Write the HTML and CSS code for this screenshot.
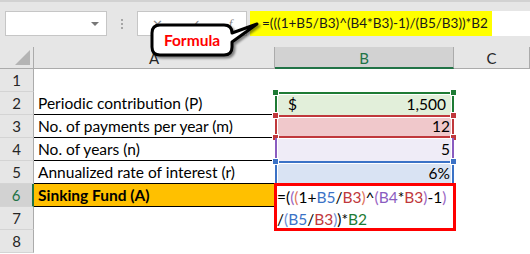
FILE: index.html
```html
<!DOCTYPE html>
<html lang="en">
<head>
    <meta charset="UTF-8">
    <title>Sinking Fund</title>
    <link rel="stylesheet" href="styles.css">
</head>
<body>
    <div class="toolbar">
        <div class="namebox"><span class="arrow"></span></div>
        <div class="dots"><i></i><i></i><i></i></div>
        <div class="fxbox"><span>&#10005;</span><span>&#10003;</span><span class="fx">f</span></div>
        <div class="formula-input"><span class="mark">=(((1+B5/B3)^(B4*B3)-1)/(B5/B3))*B2</span></div>

        <div class="callout">
            <svg width="115" height="42" viewBox="0 0 115 42">
                <path d="M12,5 H76 Q84,5 84,13 L109,4 L84,22 V27 Q84,35 76,35 H12 Q4,35 4,27 V13 Q4,5 12,5 Z" fill="#fff" stroke="#000" stroke-width="3" stroke-linejoin="round"/>
            </svg>
            <span class="callout-text">Formula</span>
        </div>
    </div>

    <div class="sheet">
        <div class="corner"><span class="tri"></span></div>
        <div class="colhead">A</div>
        <div class="colhead active">B</div>
        <div class="colhead">C</div>

        <div class="rowhead">1</div>
        <div class="cell"></div>
        <div class="cell"></div>
        <div class="cell"></div>

        <div class="rowhead">2</div>
        <div class="cell label">Periodic contribution (P)</div>
        <div class="cell ref green money"><span>$</span><span>1,500</span><i class="h tl"></i><i class="h tr"></i></div>
        <div class="cell"></div>

        <div class="rowhead">3</div>
        <div class="cell label">No. of payments per year (m)</div>
        <div class="cell ref red num">12<i class="h tl"></i><i class="h tr"></i><i class="h bl"></i><i class="h br"></i></div>
        <div class="cell"></div>

        <div class="rowhead">4</div>
        <div class="cell label">No. of years (n)</div>
        <div class="cell ref purple num">5</div>
        <div class="cell"></div>

        <div class="rowhead">5</div>
        <div class="cell label">Annualized rate of interest (r)</div>
        <div class="cell ref blue num">6%<i class="h tl"></i><i class="h tr"></i></div>
        <div class="cell"></div>

        <div class="rowhead current">6</div>
        <div class="cell label result">Sinking Fund (A)</div>
        <div class="editor">
            <span class="k">=(</span><span class="p2">(</span><span class="p3">(</span>1+<span class="c-blue">B5</span>/<span class="c-red">B3</span><span class="p3">)</span>^<span class="p4">(</span><span class="c-purple">B4</span>*<span class="c-red">B3</span><span class="p4">)</span>-1<span class="p2">)</span><br>/<span class="p5">(</span><span class="c-blue">B5</span>/<span class="c-red">B3</span><span class="p5">)</span>)*<span class="c-green">B2</span>
        </div>
        <div class="cell"></div>

        <div class="rowhead">7</div>
        <div class="cell"></div>
        <div class="cell"></div>

        <div class="rowhead">8</div>
        <div class="cell"></div>
        <div class="cell"></div>
        <div class="cell"></div>
    </div>
</body>
</html>
```

FILE: styles.css
```css
body {
    margin: 0;
    background-color: #fff;
    font-family: Lato, "Open Sans", sans-serif;
    color: #000;
    width: 530px;
    overflow: hidden;
}

/* barra della formula */
.toolbar {
    position: relative;
    height: 47px;
    background-color: #e6e6e6;
    border-top: 2px solid #d2d2d2;
    box-sizing: border-box;
    display: flex;
    align-items: flex-start;
    padding: 9px 0 0 5px;
}
.namebox {
    width: 102px;
    height: 25px;
    background-color: #fff;
    border: 1px solid #c6c6c6;
    display: flex;
    align-items: center;
    justify-content: flex-end;
    padding-right: 7px;
    box-sizing: border-box;
}
.arrow {
    width: 0;
    height: 0;
    border-left: 4px solid transparent;
    border-right: 4px solid transparent;
    border-top: 4px solid #777;
}
.dots {
    width: 30px;
    display: flex;
    flex-direction: column;
    align-items: center;
    gap: 2px;
    padding-top: 8px;
}
.dots i {
    width: 2px;
    height: 2px;
    background-color: #a6a6a6;
}
.fxbox {
    width: 110px;
    height: 25px;
    box-sizing: border-box;
    background-color: #fff;
    border: 1px solid #c6c6c6;
    display: flex;
    align-items: center;
    justify-content: space-around;
    color: #888;
    font-size: 13px;
    margin-right: 3px;
}
.fxbox .fx {
    font-style: italic;
    font-family: "Liberation Serif", serif;
}
.formula-input {
    flex: 1;
    height: 25px;
    background-color: #fff;
    display: flex;
}
.mark {
    background-color: #ffff00;
    font-size: 13.5px;
    line-height: 25px;
    padding: 0 4px 0 12px;
    color: #1a1a1a;
}

/* fumetto */
.callout {
    position: absolute;
    left: 148px;
    top: 18px;
    width: 115px;
    height: 42px;
}
.callout svg {
    position: absolute;
    left: 0;
    top: 0;
    filter: drop-shadow(2px 2px 1px rgba(0, 0, 0, 0.45));
}
.callout-text {
    position: relative;
    display: block;
    width: 88px;
    text-align: center;
    line-height: 40px;
    color: #ff0000;
    font-weight: bold;
    font-size: 15.5px;
}

/* foglio */
.sheet {
    display: grid;
    grid-template-columns: 34px 241px 179px 1fr;
    grid-template-rows: 22px repeat(8, 23px);
    font-size: 15.5px;
}
.corner {
    background-color: #e6e6e6;
    border-right: 1px solid #ababab;
    border-bottom: 1px solid #ababab;
    position: relative;
}
.tri {
    position: absolute;
    right: 3px;
    bottom: 3px;
    width: 0;
    height: 0;
    border-left: 15px solid transparent;
    border-bottom: 15px solid #b4b4b4;
}
.colhead {
    background-color: #e6e6e6;
    border-right: 1px solid #ababab;
    border-bottom: 1px solid #ababab;
    text-align: center;
    line-height: 22px;
    color: #262626;
    font-size: 15px;
}
.colhead.active {
    background-color: #d2d2d2;
    color: #217346;
    border-bottom: 2px solid #217346;
}
.rowhead {
    background-color: #e6e6e6;
    border-right: 1px solid #ababab;
    border-bottom: 1px solid #d4d4d4;
    text-align: center;
    line-height: 22px;
    color: #262626;
    font-size: 15px;
}
.rowhead.current {
    background-color: #d2d2d2;
    color: #217346;
    border-right: 2px solid #217346;
}
.cell {
    position: relative;
    box-sizing: border-box;
    line-height: 22px;
    white-space: nowrap;
}
.label {
    border-bottom: 1px solid #000;
    padding-left: 4px;
}
.result {
    background-color: #ffc000;
    font-weight: bold;
}

/* riferimenti colorati */
.ref {
    border-left: 2px solid;
    border-right: 2px solid;
    border-top: 2px solid;
    box-shadow: inset 1px 1px 0 #fff, inset -1px 0 0 #fff;
    line-height: 20px;
}
.green { border-color: #1e7b34; background-color: #e2efda; }
.red { border-color: #c0383c; background-color: #f0c8cb; border-bottom: 2px solid #c0383c; line-height: 18px; }
.purple { border-color: #8a5cc0; background-color: #efecf7; border-top: 0; line-height: 22px; }
.blue { border-color: #3b72c6; background-color: #d9e3f3; }
.money {
    display: flex;
    justify-content: space-between;
    padding: 0 6px 0 11px;
}
.num {
    text-align: right;
    padding-right: 2px;
}
.h {
    position: absolute;
    width: 5px;
    height: 5px;
    border: 1px solid #fff;
}
.green .h { background-color: #1e7b34; }
.red .h { background-color: #c0383c; }
.blue .h { background-color: #3b72c6; }
.tl { left: -5px; top: -5px; }
.tr { right: -5px; top: -5px; }
.bl { left: -5px; bottom: -5px; }
.br { right: -5px; bottom: -5px; }

/* cella in modifica */
.editor {
    grid-row: span 2;
    border: 3px solid #ff0000;
    margin: -1px -2px -1px -1px;
    background-color: #fff;
    line-height: 22px;
    white-space: nowrap;
    position: relative;
    z-index: 1;
}
.c-blue { color: #3b72c6; }
.c-red { color: #c0383c; }
.c-purple { color: #8a5cc0; }
.c-green { color: #1e7b34; }
.p2 { color: #9b67c4; }
.p3 { color: #e0745c; }
.p4 { color: #9b67c4; }
.p5 { color: #6f8fd6; }
```
